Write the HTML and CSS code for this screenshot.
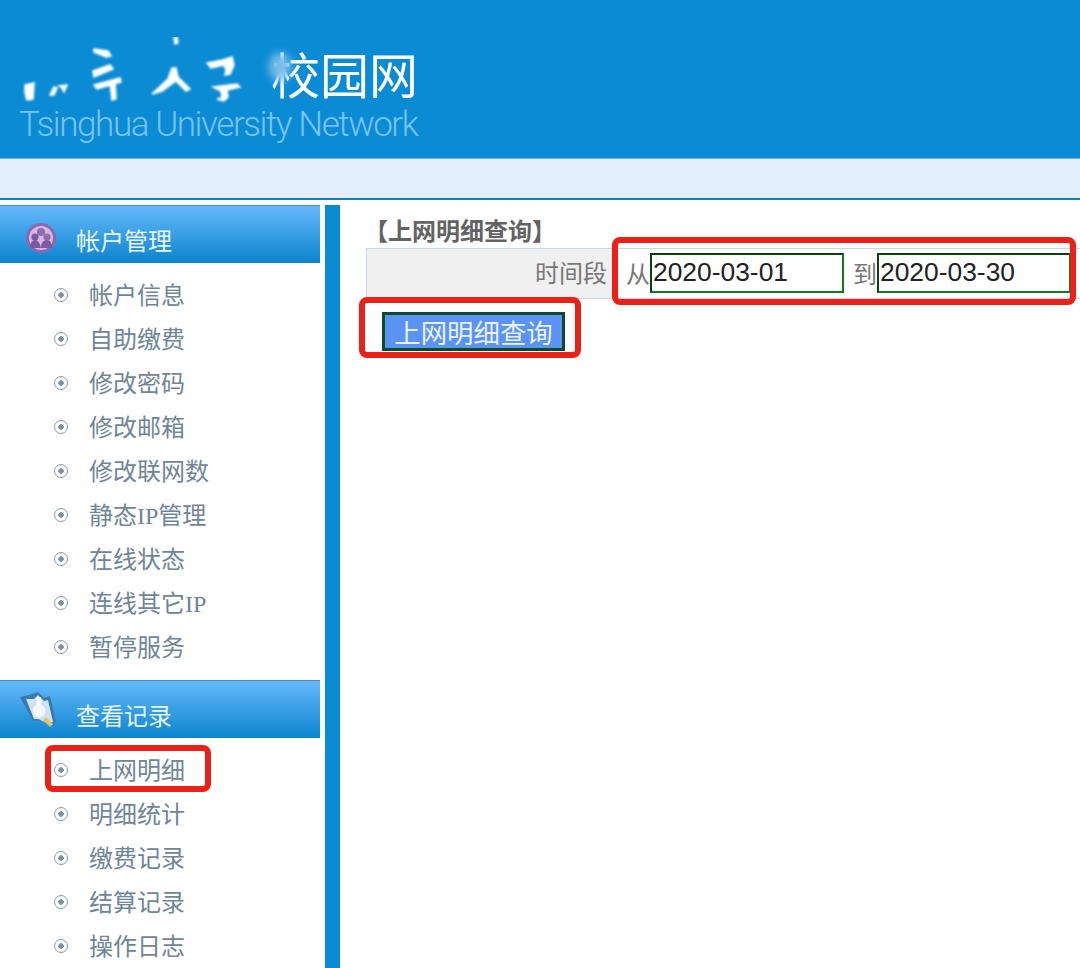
FILE: index.html
```html
<!DOCTYPE html>
<html lang="zh-CN">
<head>
<meta charset="utf-8">
<title>校园网</title>
<link rel="stylesheet" href="styles.css">
</head>
<body>
<header class="banner">
  <div class="logo">
    <div class="logo-cn">
      <span class="logo-school">校园网</span>
      <svg class="logo-blur" width="300" height="80" viewBox="19 37 300 80">
        <defs>
          <filter id="b"><feGaussianBlur stdDeviation="0.9"/></filter>
        </defs>
        <g fill="#fff" stroke="#fff" stroke-width="1.5" filter="url(#b)">
          <path d="M25 85l9-2-1 16-6 1-2-7z"/>
          <path d="M50 95l4-8 3 1-3 7zM59 86l8-1-3 7-2-4z"/>
          <path d="M94 49l14 2 3 5-5 1-12-5zM93 71l17-6 3 4-19 8zM94 85l26-7 1 4-24 7zM110 82h5l1 17-4 1z"/>
          <path d="M172 68l4 0 2 9 12 12-4 2-10-10-14 10-10 3 16-15zM174 37h3l1 6-3 1z"/>
          <path d="M207 63l16-3 9-3 2 8-4 9-5 1 1-5-2-5-13 3zM213 87l24-3 3 3-13 3 1 7-4 4-7-2 5-1-1-7z"/>
        </g>
      </svg>
      <span class="logo-smudge"></span>
    </div>
    <div class="logo-en">Tsinghua University Network</div>
  </div>
</header>
<div class="strip"></div>

<div class="layout">
  <aside class="sidebar">
    <section class="group">
      <h2 class="group-head">
        <svg class="group-icon" width="32" height="34" viewBox="0 0 32 34">
          <circle cx="16" cy="17" r="15" fill="#8c67b4"/>
          <circle cx="16" cy="17" r="12" fill="#d7b9dc"/>
          <circle cx="16" cy="11" r="4" fill="#8f6cb2"/>
          <circle cx="10" cy="16" r="3.6" fill="#7c5aa3"/>
          <circle cx="22" cy="16" r="3.6" fill="#8f6cb2"/>
          <path d="M5 27c0-6 3-8 5-8s5 2 6 8zM16 27c0-6 3-8 6-8s5 3 5 8z" fill="#7c5aa3"/>
        </svg>
        帐户管理
      </h2>
      <ul class="menu">
        <li>帐户信息</li>
        <li>自助缴费</li>
        <li>修改密码</li>
        <li>修改邮箱</li>
        <li>修改联网数</li>
        <li>静态<span class="latin">IP</span>管理</li>
        <li>在线状态</li>
        <li>连线其它<span class="latin">IP</span></li>
        <li>暂停服务</li>
      </ul>
    </section>
    <section class="group">
      <h2 class="group-head">
        <svg class="group-icon" width="42" height="38" viewBox="0 0 42 38">
          <path d="M1 5l9-2 9-3 6 6 6-2 6 26-5 3-9-5-9 1z" fill="#3b78ab"/>
          <path d="M7 7l8 0 4-4 6 6 4-1 5 22-6 1-9-4-4 0z" fill="#cfe0ee"/>
          <circle cx="20" cy="19" r="6.5" fill="#f2f7fb"/>
          <path d="M18 5h4l1 10h-6z" fill="#f2f7fb"/>
          <path d="M27 25l7 7-3 3-7-7z" fill="#e4c35a"/>
        </svg>
        查看记录
      </h2>
      <ul class="menu">
        <li>上网明细</li>
        <li>明细统计</li>
        <li>缴费记录</li>
        <li>结算记录</li>
        <li>操作日志</li>
      </ul>
    </section>
  </aside>
  <div class="divider"></div>
  <main class="content">
    <h1 class="page-title">【上网明细查询】</h1>
    <div class="form-row">
      <div class="form-label">时间段</div>
      <div class="form-field">
        <span class="word">从</span><input class="date" type="text" value="2020-03-01">
        <span class="word word-to">到</span><input class="date" type="text" value="2020-03-30">
      </div>
    </div>
    <button class="submit" type="button">上网明细查询</button>
  </main>
</div>

<div class="mark mark-dates"></div>
<div class="mark mark-button"></div>
<div class="mark mark-menu"></div>
</body>
</html>
```
FILE: styles.css
```css
* { box-sizing: border-box; }
html, body { margin: 0; padding: 0; height: 968px; overflow: hidden; background: #fff; }
body { position: relative; font-family: "Noto Sans CJK SC", "Liberation Sans", sans-serif; }

.banner { height: 158px; background: #0a8bd4; padding: 47px 0 0 19px; }
.logo { width: 400px; }
.logo-cn { position: relative; height: 58px; padding-left: 252px; }
.logo-blur { position: absolute; left: 0; top: -10px; }
.logo-smudge { position: absolute; left: 250px; top: 6px; width: 22px; height: 28px; background: #79bdea; border-radius: 45%; filter: blur(4px); }
.logo-school { font-size: 49px; line-height: 52px; color: #fff; display: block; white-space: nowrap; font-weight: 400; }
.logo-en { font-family: Roboto, "Liberation Sans", sans-serif; font-weight: 300; font-size: 35px; line-height: 40px; letter-spacing: -1.42px; color: #78c3f5; white-space: nowrap; }

.strip { height: 42px; background: #e3f0fb; border-top: 1px solid #5fb4ea; border-bottom: 2px solid #157cb8; }

.layout { display: flex; height: 768px; padding-top: 5px; }
.sidebar { width: 320px; flex: none; }
.divider { width: 15px; margin-left: 5px; flex: none; background: #0a8bd4; }
.content { flex: 1; padding: 8px 0 0 26px; min-width: 0; }

.group { margin-bottom: 12px; }
.group-head { position: relative; display: flex; align-items: center; height: 58px; margin: 0; padding: 10px 0 0 76px; font-size: 24px; font-weight: 400; line-height: 40px; color: #e8f5fd; background: linear-gradient(#66b8fb, #0b85cd); border-top: 1px solid #3f93c6; }
.group-icon { position: absolute; left: 25px; top: 15px; }
.group:nth-child(2) .group-icon { left: 19px; top: 11px; }

.menu { list-style: none; margin: 0; padding: 9px 0 0 0; }
.menu li { position: relative; height: 44px; padding-left: 89px; font-size: 24px; line-height: 44px; color: #6f8598; white-space: nowrap; }
.menu li::before { content: ""; position: absolute; left: 54px; top: 16px; width: 12px; height: 12px; border-radius: 50%; border: 1.5px solid #8a9aa8; background: radial-gradient(circle, #7f91a0 0 2.5px, #fff 3px); }
.latin { font-family: "Liberation Serif", serif; }

.page-title { margin: 0 0 2px -2px; font-size: 24px; line-height: 33px; font-weight: 700; color: #636363; white-space: nowrap; }
.form-row { display: flex; height: 51px; border: 1px solid #c3d9e8; border-right: 0; }
.form-label { width: 246px; flex: none; background: #f0f0f0; text-align: right; padding-right: 6px; font-size: 24px; line-height: 46px; color: #777; }
.form-field { flex: 1; display: flex; align-items: center; padding-left: 13px; padding-bottom: 2px; }
.word { font-size: 24px; color: #777; line-height: 40px; }
.word-to { margin-left: 9px; }
.date { width: 194px; height: 40px; padding: 0 0 0 1px; font-family: "Liberation Sans", sans-serif; font-size: 26.4px; color: #222; background: #fff; border-style: solid; border-width: 2px; border-color: #0f3f10 #117a1c #117a1c #0f3f10; border-radius: 0; outline: 0; }

.submit { display: block; width: 183px; height: 39px; margin: 13px 0 0 16px; padding: 0; font-family: "Noto Sans CJK SC", sans-serif; font-size: 26.4px; line-height: 33px; color: #e9f2ff; background: #5b93f3; border: 3px solid #0b4a2a; border-radius: 0; white-space: nowrap; }

.mark { position: absolute; border: 6px solid #ea2118; border-radius: 8px; pointer-events: none; }
.mark-dates { left: 612px; top: 237px; width: 464px; height: 68px; }
.mark-button { left: 359px; top: 297px; width: 222px; height: 61px; }
.mark-menu { left: 45px; top: 745px; width: 166px; height: 47px; }
```
